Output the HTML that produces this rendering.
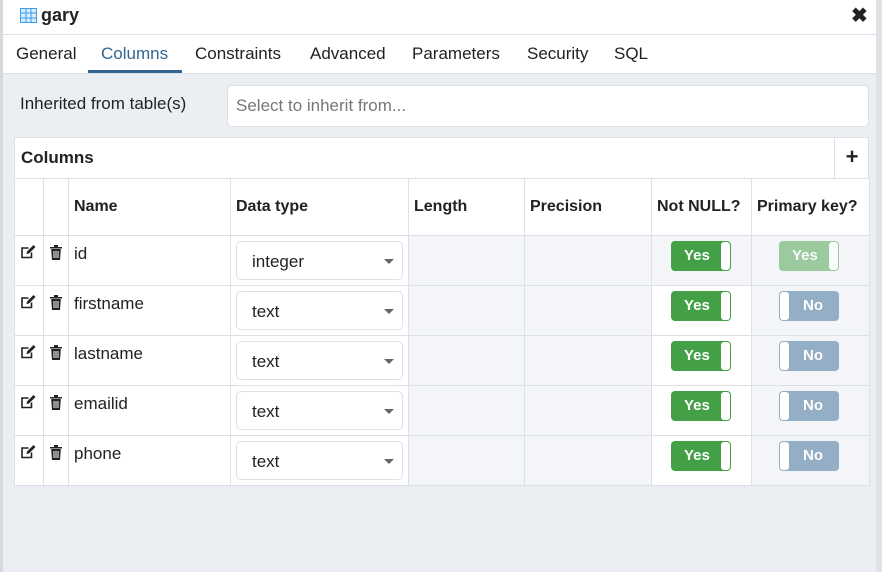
<html><head><style>
*{box-sizing:border-box}
body{margin:0;width:882px;height:572px;background:#ebeef3;font-family:"Liberation Sans",sans-serif;position:relative;overflow:hidden;color:#222}
.a{position:absolute}
.title{left:3px;top:0;width:873px;height:35px;background:#fff;border-bottom:1px solid #dde0e6}
.tabs{left:3px;top:35px;width:873px;height:39px;background:#fff;border-bottom:1px solid #dde0e6}
.tab{position:absolute;top:9px;font-size:17px;color:#222}
table{border-collapse:collapse;position:absolute;left:14px;top:178px;font-size:17px;table-layout:fixed;width:855px}
td{border:1px solid #dde0e6;padding:0;background:#fff;vertical-align:top}
td.g{background:#f3f5f8}
th{border:1px solid #dde0e6;background:#fff;text-align:left;font-weight:bold;font-size:16px;padding:0 5px;height:57px}
.sel{position:absolute;left:5px;top:5px;width:167px;height:39px;border:1px solid #dde0e6;border-radius:5px;background:#fff;padding:10px 15px;font-size:17px}
.sel:after{content:"";position:absolute;right:8px;top:17px;border:5px solid transparent;border-top:5px solid #666}
.tg{position:absolute;top:5px;width:60px;height:30px;border-radius:4px;color:#fff;font-weight:bold;font-size:15px;line-height:30px}
.y{background:#43a047}.y:after{content:"";position:absolute;right:1px;top:1px;width:9px;height:28px;background:#fff;border-radius:3px}
.n{background:#94aec6}.n:before{content:"";position:absolute;left:1px;top:1px;width:9px;height:28px;background:#fff;border-radius:3px}
.r td{height:50px;position:relative}
.nm{position:absolute;left:5px;top:8px}
</style></head><body>
<svg width="0" height="0" style="position:absolute"><defs>
<symbol id="ed" viewBox="0 0 16 16"><path d="M11 8.5V13.5H1.5V4H8" fill="none" stroke="#222" stroke-width="1.6"/><path d="M6 10L6.5 7.5L13 1L15 3L8.5 9.5Z" fill="#222"/></symbol>
<symbol id="tr" viewBox="0 0 12 15"><path d="M0 2H12V3.5H0ZM4 0H8V2H4Z" fill="#222"/><path d="M1.2 4H10.8L10 15H2Z" fill="#222"/><path d="M4 6V13M6 6V13M8 6V13" stroke="#fff" stroke-width="1"/></symbol>
</defs></svg>
<div class="a" style="left:0;top:0;width:3px;height:572px;background:#d6d9de"></div>
<div class="a" style="left:876px;top:0;width:6px;height:572px;background:#dfe2e7"></div>
<div class="a title">
<svg class="a" style="left:17px;top:8px" width="17" height="15"><rect x="0.5" y="0.5" width="16" height="14" fill="#d8ecfb" stroke="#3a9ee8"/><path d="M0 5H17M0 10H17M6 0V15M11 0V15" stroke="#3a9ee8"/></svg>
<div class="a" style="left:38px;top:5px;font-weight:bold;font-size:18px">gary</div>
<div class="a" style="left:848px;top:3px;font-weight:bold;font-size:20px">✖</div>
</div>
<div class="a tabs">
<span class="tab" style="left:13px">General</span>
<span class="tab" style="left:98px;color:#326690">Columns</span>
<div class="a" style="left:85px;top:35px;width:94px;height:3px;background:#326690"></div>
<span class="tab" style="left:192px">Constraints</span>
<span class="tab" style="left:307px">Advanced</span>
<span class="tab" style="left:409px">Parameters</span>
<span class="tab" style="left:524px">Security</span>
<span class="tab" style="left:611px">SQL</span>
</div>
<div class="a" style="left:20px;top:94px;font-size:17px">Inherited from table(s)</div>
<div class="a" style="left:227px;top:85px;width:642px;height:42px;background:#fff;border:1px solid #dde0e6;border-radius:5px;padding:10px 8px;font-size:17px;color:#777">Select to inherit from...</div>
<div class="a" style="left:14px;top:137px;width:855px;height:42px;background:#fff;border:1px solid #dde0e6"></div>
<div class="a" style="left:21px;top:148px;font-weight:bold;font-size:17px">Columns</div>
<div class="a" style="left:834px;top:137px;width:35px;height:42px;border-left:1px solid #dde0e6;text-align:center;font-weight:bold;font-size:22px;line-height:40px">+</div>
<table>
<colgroup><col style="width:29px"><col style="width:25px"><col style="width:162px"><col style="width:178px"><col style="width:116px"><col style="width:127px"><col style="width:100px"><col style="width:118px"></colgroup>
<tr><th></th><th></th><th>Name</th><th>Data type</th><th>Length</th><th>Precision</th><th>Not NULL?</th><th>Primary key?</th></tr>
<tr class="r"><td><svg class="a" style="left:5px;top:8px" width="17" height="16"><use href="#ed"/></svg></td><td><svg class="a" style="left:6px;top:9px" width="12" height="15"><use href="#tr"/></svg></td><td><span class="nm">id</span></td><td><div class="sel">integer</div></td><td class="g"></td><td class="g"></td><td class="g"><div class="tg y" style="left:19px;padding-left:13px">Yes</div></td><td class="g"><div class="tg y" style="left:27px;padding-left:13px;opacity:.5">Yes</div></td></tr>
<tr class="r"><td><svg class="a" style="left:5px;top:8px" width="17" height="16"><use href="#ed"/></svg></td><td><svg class="a" style="left:6px;top:9px" width="12" height="15"><use href="#tr"/></svg></td><td><span class="nm">firstname</span></td><td><div class="sel">text</div></td><td class="g"></td><td class="g"></td><td><div class="tg y" style="left:19px;padding-left:13px">Yes</div></td><td class="g"><div class="tg n" style="left:27px;padding-left:24px">No</div></td></tr>
<tr class="r"><td><svg class="a" style="left:5px;top:8px" width="17" height="16"><use href="#ed"/></svg></td><td><svg class="a" style="left:6px;top:9px" width="12" height="15"><use href="#tr"/></svg></td><td><span class="nm">lastname</span></td><td><div class="sel">text</div></td><td class="g"></td><td class="g"></td><td><div class="tg y" style="left:19px;padding-left:13px">Yes</div></td><td class="g"><div class="tg n" style="left:27px;padding-left:24px">No</div></td></tr>
<tr class="r"><td><svg class="a" style="left:5px;top:8px" width="17" height="16"><use href="#ed"/></svg></td><td><svg class="a" style="left:6px;top:9px" width="12" height="15"><use href="#tr"/></svg></td><td><span class="nm">emailid</span></td><td><div class="sel">text</div></td><td class="g"></td><td class="g"></td><td><div class="tg y" style="left:19px;padding-left:13px">Yes</div></td><td class="g"><div class="tg n" style="left:27px;padding-left:24px">No</div></td></tr>
<tr class="r"><td><svg class="a" style="left:5px;top:8px" width="17" height="16"><use href="#ed"/></svg></td><td><svg class="a" style="left:6px;top:9px" width="12" height="15"><use href="#tr"/></svg></td><td><span class="nm">phone</span></td><td><div class="sel">text</div></td><td class="g"></td><td class="g"></td><td><div class="tg y" style="left:19px;padding-left:13px">Yes</div></td><td class="g"><div class="tg n" style="left:27px;padding-left:24px">No</div></td></tr>
</table>
</body></html>
